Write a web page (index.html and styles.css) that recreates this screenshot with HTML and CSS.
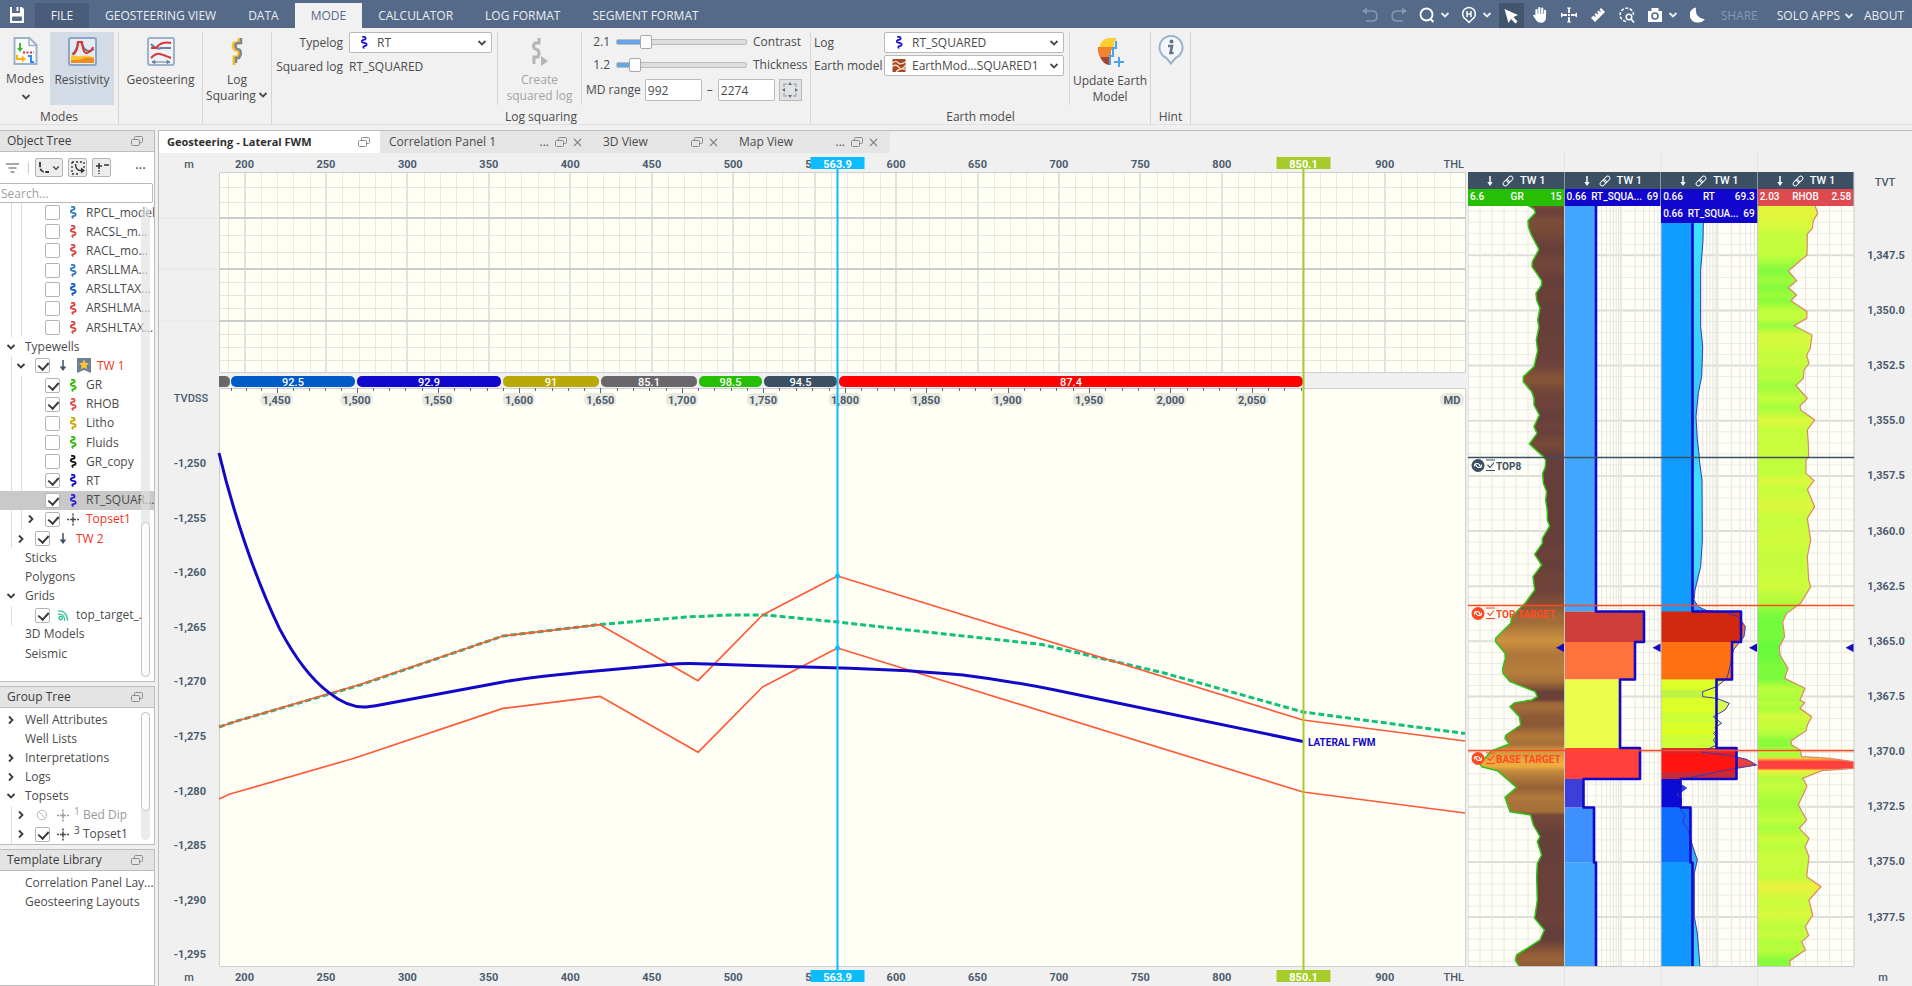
FILE: index.html
```
<!DOCTYPE html>
<html lang="en">
<head>
<meta charset="utf-8">
<title>Geosteering - Lateral FWM</title>
<link rel="stylesheet" href="styles.css">
</head>
<body>
<svg class="defs" aria-hidden="true">
  <symbol id="log" viewBox="0 0 12 14"><path d="M4 1h2.200c2 0 2 2.600.3 3l-1.800.5C3.300 5 3.300 6.800 4.800 7.100l2.600.5c1.900.5 1.900 2.600.2 3.100l-1.800.5c-.8.3-.8 1.800.6 1.800" fill="none" stroke="currentColor" stroke-width="2"/></symbol>
  <symbol id="down" viewBox="0 0 10 10"><path d="M1.500 3 5 6.500 8.500 3" fill="none" stroke="currentColor" stroke-width="1.800"/></symbol>
  <symbol id="right" viewBox="0 0 10 10"><path d="M3 1.500 6.500 5 3 8.500" fill="none" stroke="currentColor" stroke-width="1.800"/></symbol>
  <symbol id="restore" viewBox="0 0 12 11"><path d="M3.500 3.500V1.500q0-1 1-1h6q1 0 1 1v4q0 1-1 1H9M1.500 3.500h6q1 0 1 1v4q0 1-1 1h-6q-1 0-1-1v-4q0-1 1-1z" fill="none" stroke="currentColor"/></symbol>
  <symbol id="close" viewBox="0 0 10 10"><path d="M1 1l8 8M9 1 1 9" fill="none" stroke="currentColor" stroke-width="1.200"/></symbol>
  <symbol id="well" viewBox="0 0 12 14"><path d="M6 1v8" stroke="#3b5063" stroke-width="1.600"/><path d="M2.500 8h7L6 13z" fill="#3b5063"/></symbol>
  <symbol id="topset" viewBox="0 0 12 12"><path d="M0 6h2M3 6h6M10 6h2M6 0v2M6 3v6M6 10v2" stroke="currentColor" stroke-width="1.500"/></symbol>
  <symbol id="star" viewBox="0 0 14 15"><path d="M0 0h14v15l-7-3-7 3z" fill="#6d7f96"/><path d="M7 1.500l1.500 3.300 3.600.4-2.700 2.400.8 3.600L7 9.400l-3.200 1.800.8-3.600L1.900 5.200l3.600-.4z" fill="#ffc62e"/></symbol>
  <symbol id="grid" viewBox="0 0 14 14"><path d="M1 2c6-1.500 11 3 11.500 11M1 5.500c4.500-1 8 2 8 7.500" fill="none" stroke="#2bc48a" stroke-width="1.500"/><circle cx="4.200" cy="10" r="2" fill="none" stroke="#2bc48a" stroke-width="1.600"/></symbol>
  <symbol id="ban" viewBox="0 0 12 12"><circle cx="6" cy="6" r="4.800" fill="none" stroke="#bbb"/><path d="M2.600 2.600l6.800 6.800" stroke="#bbb"/></symbol>
  <symbol id="link" viewBox="0 0 14 14"><g fill="none" stroke="currentColor" stroke-width="1.100" transform="rotate(-45 7 7)"><rect x="0" y="4.500" width="8" height="5" rx="2.500"/><rect x="6" y="4.500" width="8" height="5" rx="2.500"/></g></symbol>
  <symbol id="arrow" viewBox="0 0 8 12"><path d="M4 1v7" stroke="currentColor" stroke-width="1.500"/><path d="M1.300 7h5.400L4 11z" fill="currentColor"/></symbol>
</svg>

<header class="topbar">
  <button class="tool save" aria-label="Save"><svg width="16" height="18" viewBox="0 0 16 18"><path d="M1 1h2v6h8V1h2l2 2v14H1z" fill="#fff"/><path d="M7.500 1h2v4h-2z" fill="#fff"/><rect x="3" y="10.500" width="10" height="4.500" rx="1" fill="#546a88"/></svg></button>
  <nav class="menu">
    <a class="file" href="#file">FILE</a>
    <a href="#view">GEOSTEERING VIEW</a>
    <a href="#data">DATA</a>
    <a class="active" href="#mode">MODE</a>
    <a href="#calc">CALCULATOR</a>
    <a href="#log">LOG FORMAT</a>
    <a href="#segment">SEGMENT FORMAT</a>
  </nav>
  <div class="tools">
    <button class="tool dim" aria-label="Undo"><svg width="18" height="18" viewBox="0 0 18 18"><path d="M2 5h9q5 0 5 5t-5 5H5" fill="none" stroke="currentColor" stroke-width="1.500"/><path d="M1 5l5-3.500v7z" fill="currentColor"/></svg></button>
    <button class="tool dim" aria-label="Redo"><svg width="18" height="18" viewBox="0 0 18 18"><path d="M16 5H7q-5 0-5 5t5 5h6" fill="none" stroke="currentColor" stroke-width="1.500"/><path d="M17 5l-5-3.500v7z" fill="currentColor"/></svg></button>
    <button class="tool wide" aria-label="Zoom"><svg width="16" height="16" viewBox="0 0 16 16"><circle cx="7.500" cy="7.500" r="6" fill="none" stroke="#fff" stroke-width="1.800"/><path d="M11.500 12l3 3" stroke="#fff" stroke-width="2"/></svg><svg class="chev"><use href="#down"/></svg></button>
    <button class="tool wide" aria-label="Horizon"><svg width="16" height="18" viewBox="0 0 16 18"><path d="M8 16.500 5 13.500a6.400 6.400 0 1 1 6 0z" fill="none" stroke="#fff" stroke-width="1.500"/><path d="M6 5v6M10 5v6M6 8h4" stroke="#fff" stroke-width="1.500"/></svg><svg class="chev"><use href="#down"/></svg></button>
    <button class="tool on" aria-label="Select"><svg width="16" height="18" viewBox="0 0 16 18"><path d="M1.500 2 15 8l-4.500 2 4 4.500-2 2-4.500-4.500L5.500 16z" fill="#fff"/></svg></button>
    <button class="tool" aria-label="Pan"><svg width="18" height="18" viewBox="0 0 18 18"><path d="M5.500 9V4M8.300 8V2.200M11.200 8V2.500M14 9V4.800" stroke="#fff" stroke-width="2.200" stroke-linecap="round"/><path d="M4.500 8H15v4q-.5 4.800-5 4.800-3.500 0-5-2.800L2 9.500q1.500-1.500 2.500.5z" fill="#fff"/></svg></button>
    <button class="tool" aria-label="Move"><svg width="18" height="18" viewBox="0 0 18 18"><path d="M7 1.500h4L9 5zM7 16.500h4L9 13zM1 6.500v5L4.500 9zM17 6.500v5L13.500 9z" fill="#fff"/><path d="M9 4v3M9 11v3M4 9h3M11 9h3M8 9h2" stroke="#fff" stroke-width="1.800"/></svg></button>
    <button class="tool" aria-label="Measure"><svg width="16" height="16" viewBox="0 0 16 16"><path d="M1 11 11 1l4 4L5 15z" fill="#fff"/><path d="M3.500 7.500l2 2M6 5 8 7M8.500 2.500l2 2" stroke="#546a88" stroke-width="1.400"/></svg></button>
    <button class="tool" aria-label="Lasso zoom"><svg width="18" height="18" viewBox="0 0 18 18"><path d="M15.500 9A6.700 6.700 0 1 0 8 15.500" fill="none" stroke="#fff" stroke-width="1.500" stroke-dasharray="3 1.500"/><circle cx="11" cy="11" r="2.800" fill="none" stroke="#fff" stroke-width="1.500"/><path d="M13 13l3 3.500" stroke="#fff" stroke-width="1.800"/></svg></button>
    <button class="tool wide" aria-label="Snapshot"><svg width="16" height="16" viewBox="0 0 16 16"><path d="M1 4h3.500V1h7v3H15v11H1z" fill="#fff"/><circle cx="8" cy="9" r="3" fill="none" stroke="#546a88" stroke-width="1.600"/></svg><svg class="chev"><use href="#down"/></svg></button>
    <button class="tool" aria-label="Dark theme"><svg width="16" height="18" viewBox="0 0 16 18"><path d="M6 1.500Q4.500 11.500 15 13.500 12 16.500 8.500 16.500A7.500 7.500 0 0 1 6 1.500z" fill="#fff"/></svg></button>
  </div>
  <nav class="menu account">
    <a class="dim" href="#share">SHARE</a>
    <a href="#solo">SOLO APPS <svg class="chev"><use href="#down"/></svg></a>
    <a href="#about">ABOUT</a>
  </nav>
</header>

<section class="ribbon" aria-label="Mode">
  <div class="group g-modes">
    <div class="body">
      <button class="big"><svg width="25" height="28" viewBox="0 0 25 28"><path d="M1.500 1h15l7 7v19h-22z" fill="#f8fafc" stroke="#9db2ca" stroke-width="2"/><path d="M16 1v7.500h7" fill="none" stroke="#9db2ca" stroke-width="1.500"/><path d="M7 6v6" stroke="#3dbb2e" stroke-width="2"/><path d="M4 11h6l-3 4z" fill="#3dbb2e"/><path d="M10 15.500h11" stroke="#e03030" stroke-width="2" stroke-dasharray="2 1.500"/><path d="M4 18v4h5" stroke="#ffb400" stroke-width="2.200" fill="none"/><path d="M9 18.500v7l4-3.500z" fill="#ffb400"/><path d="M15 19h3v6h3" fill="none" stroke="#2a8ff0" stroke-width="2"/></svg><span>Modes</span><svg class="chev"><use href="#down"/></svg></button>
      <button class="big pressed"><svg width="29" height="29" viewBox="0 0 29 29"><rect x="1" y="1" width="27" height="27" rx="2" fill="#e4ebf3" stroke="#8ba6c6" stroke-width="2"/><path d="M4 17Q9 14 10 5h3q3 9 8 9 2 0 5-2" fill="none" stroke="#6d7887" stroke-width="2"/><path d="M5 18Q10 14 10 5l4 0q1 12 5 11t6-6" fill="none" stroke="#e03434" stroke-width="2"/><path d="M3 18q8 2 11 1t12 1v6H3z" fill="#ffc629"/><path d="M3 23q9 0 12-1.500t11-.5v5H3z" fill="#f08a24"/></svg><span>Resistivity</span></button>
    </div>
    <p>Modes</p>
  </div>
  <div class="group g-geo">
    <div class="body"><button class="big"><svg width="28" height="29" viewBox="0 0 28 29"><rect x="1" y="1" width="26" height="27" rx="2" fill="#eef3f8" stroke="#9db2ca" stroke-width="2"/><path d="M4 7q5 6 10 4h10" fill="none" stroke="#6d7f96" stroke-width="2"/><path d="M4 11h5q3-4 7-5t8 0M4 21q5-5 9-4t11 4" fill="none" stroke="#e03434" stroke-width="2"/><path d="M5 25h18M5 25l3-1.500v3zM23 25l-3-1.500v3z" stroke="#6d7f96" fill="#6d7f96"/></svg><span>Geosteering</span></button></div>
  </div>
  <div class="group g-sq">
    <div class="body"><button class="big"><svg width="14" height="29" viewBox="0 0 14 29"><path d="M9 1v5H4q-2 4 1 7h3q2 3 0 7H4v8" fill="none" stroke="#fbbf28" stroke-width="3"/><path d="M11 1v5H7q-3 3 0 6l3 1q2 4-1 8H6v5" fill="none" stroke="#7c8794" stroke-width="2.500"/></svg><span>Log<br>Squaring<svg class="chev"><use href="#down"/></svg></span></button></div>
  </div>
  <div class="group g-log">
    <div class="body">
      <div class="fields typelog">
        <label for="typelog">Typelog</label>
        <span class="pick blue"><svg class="ico"><use href="#log"/></svg><select id="typelog"><option>RT</option></select><svg class="chev"><use href="#down"/></svg></span>
        <span>Squared log</span><output>RT_SQUARED</output>
      </div>
      <button class="big create" disabled><svg width="18" height="29" viewBox="0 0 18 29"><path d="M8 1v5H4q-3 3 0 6l3 1q2 3 0 7H3v7" fill="none" stroke="#b5b5b5" stroke-width="3"/><path d="M10 19l7 5-7 5z" fill="#b5b5b5"/></svg><span>Create<br>squared log</span></button>
      <div class="tune">
        <div class="slide"><output>2.1</output><input id="contrast" type="range" min="0" max="100" value="20" style="--v:20%"><label for="contrast">Contrast</label></div>
        <div class="slide"><output>1.2</output><input id="thick" type="range" min="0" max="100" value="10" style="--v:10%"><label for="thick">Thickness</label></div>
        <div class="range"><label for="md1">MD range</label><input id="md1" type="text" value="992"><span>–</span><input type="text" aria-label="MD range end" value="2274"><button aria-label="Fit range"><svg width="16" height="16" viewBox="0 0 16 16"><path d="M2 5V2h3M11 2h3v3M14 11v3h-3M5 14H2v-3" fill="none" stroke="#9fb0c4" stroke-width="1.500"/><path d="M8 0l2 3H6zM8 16l2-3H6zM0 8l3-2v4zM16 8l-3-2v4z" fill="#5c7088"/></svg></button></div>
      </div>
    </div>
    <p>Log squaring</p>
  </div>
  <div class="group g-earth">
    <div class="body">
      <div class="fields earth">
        <label for="elog">Log</label>
        <span class="pick blue"><svg class="ico"><use href="#log"/></svg><select id="elog"><option>RT_SQUARED</option></select><svg class="chev"><use href="#down"/></svg></span>
        <label for="emod">Earth model</label>
        <span class="pick"><svg class="ico em" viewBox="0 0 14 14"><path d="M0 0h14v14H0z" fill="#a54a28"/><path d="M0 4q4-3 6 0t8-1M0 8q4-3 7 1t7-2M4 14q3-5 10-3" fill="none" stroke="#f6dcc0" stroke-width="1.500"/></svg><select id="emod"><option>EarthMod...SQUARED1</option></select><svg class="chev"><use href="#down"/></svg></span>
      </div>
      <button class="big update"><svg width="29" height="30" viewBox="0 0 29 30"><path d="M3 10Q6 1 14 1h6v3h-2v6z" fill="#ffce2e"/><path d="M2 10h16v3h-3v7H4Q1 15 2 10z" fill="#ee8433"/><path d="M4 20h9v8Q7 27 4 20z" fill="#a8432e"/><path d="M20 4v7h-3v8h-3v9" fill="none" stroke="#47a4f2" stroke-width="2"/><path d="M23 20v10M18 25h10" stroke="#47a4f2" stroke-width="2"/></svg><span>Update Earth<br>Model</span></button>
    </div>
    <p>Earth model</p>
  </div>
  <div class="group g-hint">
    <div class="body"><button class="big" aria-label="Hint"><svg width="26" height="31" viewBox="0 0 26 31"><path d="M13 29.500 8.500 24a11.500 11.500 0 1 1 9 0z" fill="#f4f7fa" stroke="#9db2ca" stroke-width="2"/><circle cx="13.500" cy="7.500" r="2" fill="#62738a"/><path d="M10 12h4l-1.500 7h3" fill="none" stroke="#62738a" stroke-width="2.600"/></svg></button></div>
    <p>Hint</p>
  </div>
</section>

<main class="work">
  <aside class="side">
    <section class="panel">
      <h2>Object Tree<svg class="restore"><use href="#restore"/></svg></h2>
      <div class="treebar">
        <button class="flat" aria-label="Filter"><svg width="13" height="12" viewBox="0 0 13 12"><path d="M0 2h13M2.500 6h8M4.500 10h4" stroke="#8a8a8a" stroke-width="1.300"/></svg></button><i></i>
        <button class="boxed w" aria-label="Trajectory"><svg width="12" height="12" viewBox="0 0 12 12"><path d="M2 0v4q0 6 5 6h4" fill="none" stroke="#333" stroke-width="1.800" stroke-dasharray="5 1.500"/></svg><svg class="chev"><use href="#down"/></svg></button>
        <button class="boxed" aria-label="Select wells"><svg width="14" height="14" viewBox="0 0 14 14"><path d="M1 1h12v7M1 1v12h7" fill="none" stroke="#333" stroke-width="1.300" stroke-dasharray="2 2"/><path d="M4.500 3q0 6.500 5 6.500h2" fill="none" stroke="#333" stroke-width="1.400"/><path d="M10 6.500l4 3-4 3z" fill="#333"/></svg></button>
        <button class="boxed" aria-label="Tops"><svg width="14" height="12" viewBox="0 0 14 12"><path d="M4 1v11M1 4h6M9 3h5" stroke="#333" stroke-width="1.500" stroke-dasharray="6 1.300 1.500 1.300"/></svg></button>
        <button class="flat more" aria-label="More">…</button>
      </div>
      <input class="search" type="text" placeholder="Search..." aria-label="Search">
      <div class="tree tall">
        <div class="row l2"><b></b><input type="checkbox" id="t1"><svg class="ico" color="#2f78c4"><use href="#log"/></svg><label for="t1">RPCL_model</label></div>
        <div class="row l2"><b></b><input type="checkbox" id="t2"><svg class="ico" color="#e04040"><use href="#log"/></svg><label for="t2">RACSL_m...</label></div>
        <div class="row l2"><b></b><input type="checkbox" id="t3"><svg class="ico" color="#e04040"><use href="#log"/></svg><label for="t3">RACL_mo...</label></div>
        <div class="row l2"><b></b><input type="checkbox" id="t4"><svg class="ico" color="#2f78c4"><use href="#log"/></svg><label for="t4">ARSLLMA...</label></div>
        <div class="row l2"><b></b><input type="checkbox" id="t5"><svg class="ico" color="#0b5bd0"><use href="#log"/></svg><label for="t5">ARSLLTAX...</label></div>
        <div class="row l2"><b></b><input type="checkbox" id="t6"><svg class="ico" color="#e04040"><use href="#log"/></svg><label for="t6">ARSHLMA...</label></div>
        <div class="row l2"><b></b><input type="checkbox" id="t7"><svg class="ico" color="#e04040"><use href="#log"/></svg><label for="t7">ARSHLTAX...</label></div>
        <div class="row"><svg class="tw"><use href="#down"/></svg><span>Typewells</span></div>
        <div class="row l1"><svg class="tw"><use href="#down"/></svg><input type="checkbox" id="t8" checked><svg class="ico"><use href="#well"/></svg><svg class="star"><use href="#star"/></svg><label class="red" for="t8">TW 1</label></div>
        <div class="row l2"><b></b><input type="checkbox" id="t9" checked><svg class="ico" color="#26bf04"><use href="#log"/></svg><label for="t9">GR</label></div>
        <div class="row l2"><b></b><input type="checkbox" id="t10" checked><svg class="ico" color="#e34a4a"><use href="#log"/></svg><label for="t10">RHOB</label></div>
        <div class="row l2"><b></b><input type="checkbox" id="t11"><svg class="ico" color="#c4a800"><use href="#log"/></svg><label for="t11">Litho</label></div>
        <div class="row l2"><b></b><input type="checkbox" id="t12"><svg class="ico" color="#26bf04"><use href="#log"/></svg><label for="t12">Fluids</label></div>
        <div class="row l2"><b></b><input type="checkbox" id="t13"><svg class="ico" color="#111"><use href="#log"/></svg><label for="t13">GR_copy</label></div>
        <div class="row l2"><b></b><input type="checkbox" id="t14" checked><svg class="ico" color="#1408c8"><use href="#log"/></svg><label for="t14">RT</label></div>
        <div class="row l2 sel"><b></b><input type="checkbox" id="t15" checked><svg class="ico" color="#2a22dc"><use href="#log"/></svg><label for="t15">RT_SQUAR...</label></div>
        <div class="row l2"><svg class="tw"><use href="#right"/></svg><input type="checkbox" id="t16" checked><svg class="ico"><use href="#topset"/></svg><label class="red" for="t16">Topset1</label></div>
        <div class="row l1"><svg class="tw"><use href="#right"/></svg><input type="checkbox" id="t17" checked><svg class="ico"><use href="#well"/></svg><label class="red" for="t17">TW 2</label></div>
        <div class="row"><b></b><span>Sticks</span></div>
        <div class="row"><b></b><span>Polygons</span></div>
        <div class="row"><svg class="tw"><use href="#down"/></svg><span>Grids</span></div>
        <div class="row l1"><b></b><input type="checkbox" id="t18" checked><svg class="ico"><use href="#grid"/></svg><label for="t18">top_target_..</label></div>
        <div class="row"><b></b><span>3D Models</span></div>
        <div class="row"><b></b><span>Seismic</span></div>
        <div class="scroll"><span></span></div>
      </div>
    </section>
    <section class="panel">
      <h2>Group Tree<svg class="restore"><use href="#restore"/></svg></h2>
      <div class="tree group-tree">
        <div class="row"><svg class="tw"><use href="#right"/></svg><span>Well Attributes</span></div>
        <div class="row"><b></b><span>Well Lists</span></div>
        <div class="row"><svg class="tw"><use href="#right"/></svg><span>Interpretations</span></div>
        <div class="row"><svg class="tw"><use href="#right"/></svg><span>Logs</span></div>
        <div class="row"><svg class="tw"><use href="#down"/></svg><span>Topsets</span></div>
        <div class="row l1 off"><svg class="tw"><use href="#right"/></svg><svg class="ban"><use href="#ban"/></svg><svg class="ico"><use href="#topset"/></svg><sup>1</sup><span>Bed Dip</span></div>
        <div class="row l1"><svg class="tw"><use href="#right"/></svg><input type="checkbox" id="t19" checked><svg class="ico"><use href="#topset"/></svg><sup>3</sup><label for="t19">Topset1</label></div>
        <div class="scroll upper"><span></span></div>
      </div>
    </section>
    <section class="panel">
      <h2>Template Library<svg class="restore"><use href="#restore"/></svg></h2>
      <div class="tree library">
        <div class="row"><b></b><span>Correlation Panel Lay...</span></div>
        <div class="row"><b></b><span>Geosteering Layouts</span></div>
      </div>
    </section>
  </aside>

  <section class="views">
    <div class="tabs" role="tablist">
      <div class="tab t-geo active" role="tab">Geosteering - Lateral FWM<svg class="restore"><use href="#restore"/></svg></div>
      <div class="tab t-corr" role="tab">Correlation Panel 1<em>...</em><svg class="restore"><use href="#restore"/></svg><svg class="x"><use href="#close"/></svg></div>
      <div class="tab t-3d" role="tab">3D View<em></em><svg class="restore"><use href="#restore"/></svg><svg class="x"><use href="#close"/></svg></div>
      <div class="tab t-map" role="tab">Map View<em>...</em><svg class="restore"><use href="#restore"/></svg><svg class="x"><use href="#close"/></svg></div>
    </div>
    <div class="plots">
      <svg id="section" class="plot" role="img" aria-label="Lateral section"></svg>
      <div class="tracks">
        <svg id="logs" class="plot" role="img" aria-label="Typewell logs"></svg>
        <div class="heads">
          <div class="head"><h3><svg class="a"><use href="#arrow"/></svg><svg class="k"><use href="#link"/></svg>TW 1</h3><div class="scale green"><span>6.6</span><span>GR</span><span>15</span></div></div>
          <div class="head"><h3><svg class="a"><use href="#arrow"/></svg><svg class="k"><use href="#link"/></svg>TW 1</h3><div class="scale"><span>0.66</span><span>RT_SQUA...</span><span>69</span></div></div>
          <div class="head"><h3><svg class="a"><use href="#arrow"/></svg><svg class="k"><use href="#link"/></svg>TW 1</h3><div class="scale"><span>0.66</span><span>RT</span><span>69.3</span></div><div class="scale"><span>0.66</span><span>RT_SQUA...</span><span>69</span></div></div>
          <div class="head"><h3><svg class="a"><use href="#arrow"/></svg><svg class="k"><use href="#link"/></svg>TW 1</h3><div class="scale rose"><span>2.03</span><span>RHOB</span><span>2.58</span></div></div>
        </div>
      </div>
    </div>
  </section>
</main>
<script src="plots.js"></script>
</body>
</html>
```

FILE: styles.css
```
* { box-sizing: border-box; }
html, body { height: 100%; }
body {
  margin: 0; display: flex; flex-direction: column; overflow: hidden;
  background: #f0f0f0; color: #4b4b4b;
  font: 12px/16px "Open Sans", "Noto Sans", sans-serif;
}
button, input, select { font: inherit; color: inherit; }
button { border: 0; background: none; padding: 0; }
a { color: inherit; text-decoration: none; }
p, h2, h3 { margin: 0; font-weight: 400; font-size: 12px; }
svg { flex: none; }
.defs { position: absolute; width: 0; height: 0; }
.chev { width: 10px; height: 10px; }

.topbar { display: flex; height: 28px; flex: none; background: #546a88; color: #e9edf3; }
.save { width: 35px; }
.tool { display: flex; align-items: center; justify-content: center; width: 29px; flex: none; padding-top: 2px; }
.tool.save { width: 33px; }
.tool.wide { width: 42px; gap: 5px; }
.tool.on { width: 25px; margin: 3px 2px 0 1px; padding: 0; background: #43556d; }
.tool.dim, .menu .dim { color: #8797ae; }
.menu { display: flex; }
.menu a { display: flex; align-items: center; gap: 6px; padding: 3px 16px 0; white-space: nowrap; }
.menu .file { background: #495c7a; margin: 3px 0 0 2px; padding: 0; width: 54px; justify-content: center; }
.menu .active { background: #f1f1f1; color: #546a88; margin-top: 3px; padding-top: 0; }
.tools { display: flex; margin-left: auto; }
.account { padding-right: 8px; }
.menu.account a { padding: 3px 0 0 8px; gap: 4px; }
.menu.account a + a { padding-left: 19px; }
.menu.account a:last-child { padding-left: 10px; }

.ribbon { display: flex; flex: none; height: 97px; background: #f1f1f1; border-bottom: 1px solid #dfe1e4; padding: 4px 0 0; }
.group { display: flex; flex-direction: column; justify-content: space-between; border-right: 1px solid #d6d6d6; flex: none; }
.group p { text-align: center; line-height: 15px; }
.body { display: flex; height: 73px; }
.big { display: flex; flex-direction: column; align-items: center; padding-top: 5px; gap: 6px; flex: 1; white-space: nowrap; }
.big .chev { margin: -1px 0 0 2px; }
.big:disabled { color: #a4a4a4; }
.pressed { background: #d3dbe6; flex: 0 0 64px; margin-right: 4px; }
.g-modes { width: 119px; }
.g-geo { width: 84px; }
.g-sq { width: 69px; }
.g-log { width: 539px; }
.g-earth { width: 340px; }
.g-hint { width: 40px; }
.g-hint .big { padding-top: 2px; }
.fields { display: grid; align-content: start; align-items: center; white-space: nowrap; }
.typelog { gap: 3px 6px; grid-template-columns: 71px 143px; grid-template-rows: 21px 22px; padding-right: 5px; }
.typelog > label, .typelog > span:not(.pick) { text-align: right; }
.earth { gap: 2px 0; grid-template-columns: 70px 180px; grid-template-rows: 21px 21px; padding: 0 5px 0 3px; }
.pick { position: relative; display: block; height: 21px; }
.pick select { appearance: none; width: 100%; height: 100%; padding: 0 20px 0 27px; background: #fff; border: 1px solid #b9b9b9; border-radius: 2px; }
.pick .ico { position: absolute; left: 9px; top: 4px; width: 12px; height: 13px; color: #2018d0; }
.pick .ico.em { width: 14px; left: 8px; }
.pick .chev { position: absolute; right: 5px; top: 6px; }
.create { border: solid #d6d6d6; border-width: 0 1px; flex: 0 0 85px; }
.tune { display: flex; flex-direction: column; padding: 0 5px 0 4px; flex: 1; }
.slide { display: grid; grid-template-columns: 24px 131px 1fr; column-gap: 6px; align-items: center; height: 23px; padding-bottom: 4px; }
.slide output { text-align: right; }
.slide label { white-space: nowrap; }
.slide input { appearance: none; width: 131px; height: 13px; margin: 0; background: none; }
.slide input::-webkit-slider-runnable-track { height: 6px; border: 1px solid #bcbcbc; border-radius: 2px; background: linear-gradient(90deg, #62a6e8 var(--v), #dedede var(--v)); }
.slide input::-webkit-slider-thumb { appearance: none; width: 12px; height: 14px; margin-top: -5px; background: #fdfdfd; border: 1px solid #a8a8a8; border-radius: 2px; }
.range { display: flex; align-items: center; gap: 4px; padding-top: 1px; white-space: nowrap; }
.range span { padding: 0 1px; }
.range input { width: 57px; height: 22px; padding: 0 2px; border: 1px solid #b9b9b9; border-radius: 2px; background: #fff; }
.range button { display: flex; align-items: center; justify-content: center; width: 23px; height: 22px; border: 1px solid #b9b9b9; background: #e2e2e2; }
.update { border-left: 1px solid #d6d6d6; }

.work { display: grid; grid-template-columns: 155px 1fr; column-gap: 3px; flex: 1; min-height: 0; padding-top: 5px; }
.side { display: grid; grid-template-rows: 552fr 159fr 137fr; gap: 4px; min-height: 0; }
.panel { display: flex; flex-direction: column; min-height: 0; background: #fff; border: solid #bdbdbd; border-width: 1px 1px 1px 0; overflow: hidden; }
.panel h2 { display: flex; align-items: center; justify-content: space-between; height: 21px; flex: none; padding: 0 11px 0 7px; background: #e4e4e4; border-bottom: 1px solid #bdbdbd; color: #3c3c3c; }
.restore { width: 12px; height: 11px; color: #8c8c8c; }
.treebar { display: flex; align-items: center; height: 31px; flex: none; padding-left: 6px; gap: 5px; }
.treebar i { width: 1px; height: 12px; background: #ccc; margin: 0 1px 0 4px; }
.treebar button { display: flex; align-items: center; justify-content: center; }
.boxed { width: 19px; height: 19px; border: 1px solid #b4b4b4; border-radius: 2px; background: #ededed; }
.boxed.w { width: 28px; gap: 2px; }
.boxed .chev { width: 8px; height: 8px; }
.treebar .more { margin-left: auto; padding: 0 8px 7px 0; font-size: 14px; }
.search { width: 153px; height: 20px; flex: none; padding: 0 1px; border: 1px solid #b9b9b9; border-left: 0; border-radius: 0 2px 2px 0; }
.search::placeholder { color: #a0a0a0; }
.tree { position: relative; display: flex; flex-direction: column; flex: 1; min-height: 0; }
.tree.tall { padding-bottom: 18px; }
.tree.group-tree { padding: 2px 0 0; }
.tree.library { padding-top: 2px; }
.row { display: flex; align-items: center; flex: 1 1 19px; min-height: 0; padding-left: 5px; white-space: nowrap; overflow: hidden; }
.library .row { flex: 0 0 19px; }
.l1 { padding-left: 15px; background-image: linear-gradient(90deg, transparent 11px, #dedede 11px, #dedede 12px, transparent 12px); }
.l2 { padding-left: 25px; background-image: linear-gradient(90deg, transparent 11px, #dedede 11px, #dedede 12px, transparent 12px, transparent 21px, #dedede 21px, #dedede 22px, transparent 22px); }
.row.sel { background: #c9c9c9; }
.row > b, .tw { width: 12px; height: 10px; margin-right: 8px; flex: none; color: #3c3c3c; }
.row input { appearance: none; position: relative; width: 15px; height: 15px; margin: 0 7px 0 0; flex: none; border: 1px solid #b4b4b4; border-radius: 2px; background: #fff; }
.row input:checked::before { content: ""; position: absolute; left: 4px; top: 1px; width: 5px; height: 8px; border: solid #3c3c3c; border-width: 0 2px 2px 0; transform: rotate(42deg); }
.row .ico { width: 12px; height: 13px; margin-right: 7px; }
.row .star { width: 14px; height: 15px; margin: 0 6px 0 1px; }
.ban { width: 12px; height: 12px; margin: 0 9px 0 1px; }
.row sup { width: 5px; margin: -8px 4px 0 -2px; font-size: 10px; line-height: 10px; }
.off { color: #9a9a9a; }
.red { color: #f4321e; }
.scroll { position: absolute; right: 4px; top: 4px; bottom: 4px; width: 9px; border-radius: 5px; background: rgba(225,225,225,.65); }
.scroll span { position: absolute; left: 0; right: 0; bottom: 0; height: 33%; border: 1px solid #c4c4c4; border-radius: 5px; background: rgba(255,255,255,.85); }
.upper span { top: 0; bottom: auto; height: 77%; }

.views { display: flex; flex-direction: column; min-width: 0; min-height: 0; border: solid #bdbdbd; border-width: 1px 0 0 1px; }
.tabs { display: flex; height: 22px; flex: none; }
.tab { display: flex; align-items: center; gap: 6px; padding: 0 12px 0 9px; background: #e5e5e5; white-space: nowrap; }
.tab em { margin-left: auto; font-style: normal; }
.tab .x { width: 9px; height: 9px; color: #777; }
.tab.active { background: #fff; color: #2e2e2e; font: 700 11px/16px "Open Sans", "Noto Sans", sans-serif; justify-content: space-between; padding: 0 10px 0 8px; }
.t-geo { width: 221px; }
.t-corr { width: 214px; }
.t-3d { width: 136px; }
.t-map { width: 160px; }
.plots { display: grid; grid-template-columns: 1309fr 444fr; flex: 1; min-height: 0; }
.plot { display: block; width: 100%; height: 100%; min-height: 0; }
.plot text { font: 700 11px Roboto, sans-serif; fill: #4a5b6e; dominant-baseline: central; text-anchor: middle; stroke: none; }
.plot .start { text-anchor: start; }
.plot .end { text-anchor: end; }
.plot .light { font-weight: 500; }
.plot .bold { font-size: 10px; }
.plot .white { fill: #fff; }
.tracks { position: relative; min-width: 0; min-height: 0; }
.heads { position: absolute; left: 0; top: 19px; width: 87%; display: grid; grid-template-columns: repeat(4, 1fr); align-items: start; color: #fff; font: 500 10px/16px Roboto, sans-serif; }
.head { border-right: 1px solid #8d9aa6; min-width: 0; }
.head h3 { display: flex; justify-content: center; align-items: center; gap: 8px; height: 17px; background: #3b5063; font: 500 11px/16px Roboto, sans-serif; }
.a { width: 8px; height: 12px; }
.k { width: 12px; height: 12px; margin-right: -2px; }
.scale { display: flex; justify-content: space-between; height: 17px; padding: 0 2px; background: #1106cb; white-space: nowrap; }
.scale.green { background: #26bf04; }
.scale.rose { background: #de4a50; }
```

FILE: plots.js
```
const NS = 'http://www.w3.org/2000/svg';
function el(parent, tag, attrs, text) {
  const n = document.createElementNS(NS, tag);
  for (const k in attrs) n.setAttribute(k, attrs[k]);
  if (text !== undefined) n.textContent = text;
  parent.appendChild(n);
  return n;
}

/* A canvas stretches its shapes with the pane; labels keep their size and
   are anchored by percentage. */
function canvas(id, x0, y0, w, h) {
  const root = document.getElementById(id);
  const layer = () => el(root, 'svg', { viewBox: `${x0} ${y0} ${w} ${h}`, preserveAspectRatio: 'none', width: '100%', height: '100%' });
  const mark = (x, y) => el(root, 'svg', { x: (x - x0) / w * 100 + '%', y: (y - y0) / h * 100 + '%', overflow: 'visible' });
  const label = (x, y, text, cls = '') => el(mark(x, y), 'text', { x: 0, y: 0, class: cls }, text);
  return { root, layer, mark, label };
}
const line = (g, x1, y1, x2, y2, stroke, width = 1) =>
  el(g, 'path', { d: `M${x1} ${y1}L${x2} ${y2}`, stroke, 'stroke-width': width, fill: 'none' });
const path = pts => 'M' + pts.map(p => p.join(' ')).join('L');

/* ---------- lateral section ---------- */
(function () {
  const c = canvas('section', 159, 153, 1309, 833);
  const g = c.layer();
  const L = 219, R = 1465, PX = 1.6289;
  const thl = v => 244.5 + (v - 200) * PX;
  el(g, 'rect', { x: L, y: 172, width: R - L, height: 200, fill: '#fffff6' });
  el(g, 'rect', { x: L, y: 388, width: R - L, height: 578, fill: '#fffff6' });
  for (let v = 190; v <= 940; v += 10) {
    const x = Math.round(thl(v)) + (v % 50 ? 0.5 : 0);
    line(g, x, 172, x, 372, v % 50 ? '#e9e9e2' : '#e2e2dc', v % 50 ? 1 : 2);
  }
  [187, 202, 235, 252, 282, 295, 308, 334, 347, 360].forEach(y => line(g, L, y + 0.5, R, y + 0.5, '#e5e5de'));
  [218, 269, 321].forEach(y => { line(g, L, y, R, y, '#cbcbcb', 2); line(g, 159, y, L, y, '#e6e6e2'); });
  el(g, 'path', { d: `M${L}.5 172.5H${R}.5V372.500H${L}.5zM${L}.5 388.500H${R}.5V966.500H${L}.5z`, fill: 'none', stroke: '#cfcfcf' });

  const segs = [[231, 355, '#005bc8', '92.5'], [357, 501, '#1106cb', '92.9'], [503, 599, '#b8a904', '91'], [601, 697, '#6a676b', '85.1'],
    [699, 762, '#26bf04', '98.5'], [764, 837, '#3b5063', '94.5'], [839, 1303, '#ff0000', '87.4']];
  el(g, 'path', { d: 'M219 376h6q5 0 5 5.500t-5 5.500h-6z', fill: '#6a676b' });
  segs.forEach(s => {
    el(g, 'rect', { x: s[0], y: 376, width: s[1] - s[0], height: 11, rx: 5, fill: s[2] });
    c.label((s[0] + s[1]) / 2, 382, s[3], 'white light');
  });

  const md = [231, 276.5, 356.5, 438, 519, 600.3, 682, 763, 845, 926, 1007.5, 1089, 1170.4, 1251.9, 1333];
  for (let i = 0; i < md.length - 1; i++) {
    const n = i ? 5 : 3;
    for (let k = 0; k < n; k++) {
      const x = Math.round(md[i] + (md[i + 1] - md[i]) * k / n) + 0.5;
      if (x < 1304) line(g, x, 388, x, i && !k ? 393 : 391, '#5c6b7a');
    }
  }
  const badge = (x, y, text, w) => {
    const m = c.mark(x, y);
    el(m, 'rect', { x: -w / 2, y: -6, width: w, height: 13, rx: 5, fill: '#e9e9e0' });
    el(m, 'text', { x: 0, y: 1 }, text);
  };
  for (let i = 1; i <= 13; i++) badge(md[i], 399, (1400 + i * 50).toLocaleString('en-US'), 32);
  badge(1452, 399, 'MD', 24);

  [[164, 189], [977, 189]].forEach(([y, mx]) => {
    c.label(mx, y, 'm', 'light');
    for (let v = 200; v <= 900; v += 50) if (v !== 850) c.label(thl(v), y, v);
    c.label(1464, y, 'THL', 'end light');
  });
  c.label(191, 398, 'TVDSS', 'light');
  for (let i = 0; i < 10; i++) c.label(206, 463.5 + i * 54.6, '-' + (1250 + i * 5).toLocaleString('en-US'), 'end');

  const shape = c.layer();
  const draw = (pts, stroke, w, dash) => el(shape, 'path', { d: path(pts), fill: 'none', stroke, 'stroke-width': w, 'stroke-dasharray': dash || 'none', 'stroke-linejoin': 'round' });
  draw([[219, 727], [237, 721], [333, 693], [360, 685], [503, 636], [600, 624.500], [686, 617], [730, 615], [766, 615], [837.500, 622], [908, 630], [1042, 644.500], [1164, 673], [1303, 712], [1465, 733.500]], '#12bf7c', 3, '6 3');
  draw([[219, 727], [237, 721], [333, 692.500], [360, 684.500], [503, 636], [600, 624.700], [698, 680.700], [762.500, 615], [837.500, 576], [1303, 720], [1465, 741]], '#ff5a36', 1.7);
  draw([[219, 799], [230, 794], [355, 758], [503, 708.400], [600, 696.300], [698, 752.300], [762.500, 687], [837.500, 648], [1303, 792], [1465, 813]], '#ff5a36', 1.7);
  el(shape, 'path', { d: 'M219 453C233 512 255 578 279.500 628.600Q303 673 328.600 692.400Q348 708 366 707Q376 706 385 704L503 682Q530 677 596 671L668 664.400Q685 663 708 664L762 665.800L850 668.300L908 670.700Q940 673 963 675Q1010 681 1055 690L1303 741.500', fill: 'none', stroke: '#1408c8', 'stroke-width': 3 });

  [[837.5, '#0bbcff', '563.9', 54], [1303.5, '#a6cb2b', '850.1', 54]].forEach(([x, col, text, w]) => {
    line(shape, x, 168, x, 970, col, 2);
    [163, 976].forEach(y => {
      const m = c.mark(x, y);
      el(m, 'rect', { x: -w / 2, y: -6, width: w, height: 12, fill: col });
      el(m, 'text', { x: 0, y: 1, class: 'white' }, text);
    });
  });
  [576, 648].forEach(y => el(shape, 'circle', { cx: 837.5, cy: y, r: 2.5, fill: '#0bbcff' }));
  c.label(1308, 742, 'LATERAL FWM', 'bold start').style.fill = '#1408c8';
})();

/* ---------- typewell tracks ---------- */
(function () {
  const c = canvas('logs', 1468, 153, 444, 833);
  const defs = el(c.root, 'defs', {});
  const g = c.layer();
  const X = [1468, 1564.5, 1661, 1757.5, 1854], T = 172, B = 966.5;
  const y = a => a.map(([px, py]) => [1460 + px / 3, py]);
  const join = (a, b, d) => y([].concat(a.map(p => [p[0], 160 + p[1] / 3]), b.map(p => [p[0], 440 + p[1] / 3]), d.map(p => [p[0], 700 + p[1] / 3])));

  el(g, 'rect', { x: 1468, y: T, width: 386, height: B - T, fill: '#fffff8' });
  for (let v = 0, p = 211.2; p < B; p += 11.03, v++) line(g, 1468, p, 1854, p, v % 5 === 4 ? '#deded8' : '#ecece6', v % 5 === 4 ? 2 : 1);
  [0, 3].forEach(t => { for (let i = 1; i < 8; i++) line(g, X[t] + i * 12, T, X[t] + i * 12, B, '#e8e8e2'); });
  [1, 2].forEach(t => {
    for (let e = -1; e < 2; e++) for (let n = 1; n < 10; n++) {
      const x = X[t] + (Math.log10(n) + e - Math.log10(0.66)) * 47.7;
      if (x > X[t] && x < X[t + 1]) line(g, x, T, x, B, '#e6e6e0', n === 1 ? 2 : 1);
    }
  });

  const hex = h => [1, 3, 5].map(i => parseInt(h.substr(i, 2), 16));
  function ramp(stops, v) {
    if (v <= stops[0][0]) return stops[0][1];
    for (let i = 1; i < stops.length; i++) if (v <= stops[i][0]) {
      const [a, ca] = stops[i - 1], [b, cb] = stops[i], f = (v - a) / (b - a), p = hex(ca), q = hex(cb);
      return 'rgb(' + p.map((k, j) => Math.round(k + (q[j] - k) * f)) + ')';
    }
    return stops[stops.length - 1][1];
  }
  function gradient(id, pts, stops) {
    const n = el(defs, 'linearGradient', { id, gradientUnits: 'userSpaceOnUse', x1: 0, x2: 0, y1: pts[0][1], y2: B });
    pts.forEach(p => el(n, 'stop', { offset: (p[1] - pts[0][1]) / (B - pts[0][1]), 'stop-color': ramp(stops, p[0]) }));
  }
  const at = px => 1460 + px / 3;

  const gr = join(
    [[205,137],[222,147],[226,158],[204,182],[205,200],[214,225],[237,268],[217,305],[216,320],[245,362],[245,375],[228,400],[230,420],[240,445],[233,480],[237,500],[229,540],[233,572],[222,620],[190,650],[190,665],[215,695],[222,715],[222,735],[238,765],[222,800],[231,820],[208,852],[250,890]],
    [[257,60],[256,80],[248,100],[250,130],[260,155],[257,180],[262,215],[262,240],[269,258],[247,295],[247,310],[224,343],[245,375],[219,410],[224,450],[195,490],[155,530],[152,550],[107,595],[107,605],[135,640],[136,655],[128,685],[129,700],[150,725],[225,755],[232,770],[215,780],[165,788]],
    [[150,20],[178,50],[182,75],[138,105],[135,115],[148,132],[95,152],[60,190],[65,200],[112,212],[170,262],[135,292],[150,335],[212,345],[220,375],[240,410],[232,425],[245,465],[232,490],[230,530],[232,600],[224,655],[253,690],[240,720],[170,765],[166,780],[178,800]]);
  gradient('gGR', gr, [[at(60), '#eead3e'], [at(107), '#c98f3e'], [at(135), '#b0783a'], [at(190), '#855336'], [at(225), '#6b423a'], [at(240), '#653d3a']]);
  el(g, 'path', { d: path(gr) + `L1564.5 ${B}V205z`, fill: 'url(#gGR)' });
  el(g, 'path', { d: path(gr), fill: 'none', stroke: '#2fc414', 'stroke-width': 1.5, 'stroke-linejoin': 'round' });

  function blocks(x0, list, stroke) {
    list.forEach(b => { if (b[3]) el(g, 'rect', { x: x0, y: b[0], width: b[2] - x0, height: b[1] - b[0], fill: b[3] }); });
    if (stroke) el(g, 'path', { d: path(list.flatMap(b => [[b[2], b[0]], [b[2], b[1]]])), fill: 'none', stroke: '#1408c8', 'stroke-width': 2.600, 'stroke-linejoin': 'round' });
  }
  blocks(1564.5, [[205, 611.500, 1596, '#41a6ff'], [611.500, 642, 1644, '#d03e3a'], [642, 679.500, 1635, '#ff723d'], [679.500, 748, 1620, '#ebff4a'],
    [748, 779, 1640, '#ff403c'], [779, 807.500, 1583.500, '#3e3ed8'], [807.500, 862.500, 1594, '#3f90ff'], [862.500, B, 1596, '#41a6ff']], true);

  const rt = join(
    [[730,187],[729,240],[722,330],[722,500],[728,560],[725,650],[715,700],[708,770],[712,840],[718,890]],
    [[718,60],[726,120],[727,300],[722,380],[705,450],[702,480],[715,500],[740,512],[800,518],[835,530],[856,560],[852,590],[820,630],[812,670],[805,700],[800,715],[770,740],[728,755],[728,770],[770,775]],
    [[808,10],[795,30],[760,50],[785,70],[765,82],[770,92],[760,100],[770,110],[760,120],[770,135],[725,157],[800,165],[860,178],[890,195],[800,210],[690,233],[660,237],[665,255],[680,264],[665,275],[650,283],[665,295],[662,330],[675,345],[668,365],[685,392],[692,420],[712,480],[703,520],[703,650],[712,700],[720,800]]);
  const rg = el(defs, 'linearGradient', { id: 'gRT', gradientUnits: 'userSpaceOnUse', x1: 0, x2: 0, y1: 205, y2: B });
  [[205, '#3fe4ff'], [420, '#35c8ff'], [480, '#3fe0ff'], [570, '#3fd8ff'], [610, '#2f9cff'], [612, '#e05838'], [635, '#f07840'], [642, '#ffb030'], [680, '#ff8a30'], [681, '#d8ff40'], [746, '#d8ff60'], [748, '#ff5040'], [778, '#d03040'], [779, '#2030e0'], [808, '#3f70f0'], [862, '#38b0f0'], [B, '#38d0ff']]
    .forEach(s => el(rg, 'stop', { offset: (s[0] - 205) / (B - 205), 'stop-color': s[1] }));
  el(g, 'path', { d: path(rt) + `L1661 ${B}V222z`, fill: 'url(#gRT)' });
  const sq = [[205, 611.500, 1692.500, '#119cff'], [611.500, 642, 1741, '#d22810'], [642, 679.500, 1732, '#ff7010'], [679.500, 748, 1716.500, '#dcff28'],
    [748, 779, 1736.500, '#ff1410'], [779, 807.500, 1680.500, '#0b0bd8'], [807.500, 862.500, 1690.500, '#0f6cff'], [862.500, B, 1692.500, '#0f98ff']];
  blocks(1661, sq, false);
  el(g, 'rect', { x: 1661, y: 690, width: 41, height: 8, fill: '#b4f050', opacity: 0.7 });
  el(g, 'rect', { x: 1661, y: 713, width: 54, height: 10, fill: '#c8ff3c', opacity: 0.7 });
  el(g, 'rect', { x: 1661, y: 735, width: 54, height: 13, fill: '#c8ff3c', opacity: 0.7 });
  el(g, 'rect', { x: 1661, y: 748, width: 75, height: 5, fill: '#d02a3a' });
  el(g, 'rect', { x: 1661, y: 772, width: 75, height: 7, fill: '#c82a3a' });
  el(g, 'path', { d: path(rt), fill: 'none', stroke: '#3a36b4', 'stroke-width': 1 });
  blocks(1661, sq.map(b => b.slice(0, 3)), true);

  const rh = join(
    [[1065,137],[1073,160],[1060,182],[1057,205],[1042,222],[1041,285],[985,333],[1010,362],[985,383],[1010,405],[993,422],[1041,455],[1040,475],[1003,497],[1056,525],[1051,565],[1040,585],[1047,610],[1032,630],[1030,655],[1008,677],[1042,715],[1020,738],[1022,750],[1064,780],[1042,810],[1045,850],[1046,890]],
    [[1038,60],[1038,100],[1062,122],[1042,148],[1064,200],[1042,235],[1052,300],[1042,350],[1046,420],[1052,440],[1022,490],[980,520],[968,545],[974,590],[958,620],[960,645],[984,685],[974,715],[1035,745],[1020,780],[1034,788]],
    [[1020,25],[1055,50],[1042,75],[1038,92],[993,123],[995,135],[1020,150],[1025,170],[1110,175],[1182,185],[1182,205],[1085,212],[1028,235],[1041,258],[1015,315],[1040,360],[1018,385],[1047,415],[1035,440],[1047,470],[1040,530],[1083,560],[1047,600],[1058,645],[1036,680],[1046,707],[1025,725],[1036,750],[990,782],[990,800]]);
  gradient('gRH', rh, [[at(958), '#68fa3c'], [at(990), '#86fb3c'], [at(1020), '#aafd3c'], [at(1040), '#c2fe3c'], [at(1062), '#dcf83c'], [at(1083), '#eef03c'], [at(1130), '#ffb03c'], [at(1180), '#ff403c']]);
  el(g, 'path', { d: path(rh) + `L1757.5 ${B}V205z`, fill: 'url(#gRH)' });
  el(g, 'path', { d: path(rh), fill: 'none', stroke: '#e0856a', 'stroke-width': 1.2 });

  X.forEach(x => line(g, x, T, x, B, '#c9c9c9'));
  X.slice(1, 4).forEach(x => { line(g, x, 153, x, T, '#e4e4de'); line(g, x, B, x, 986, '#e4e4de'); });
  line(g, 1468, B, 1854, B, '#c9c9c9');

  [[457.5, '#3b5063', 'TOP8'], [605.5, '#ff4a24', 'TOP TARGET'], [750.5, '#ff4a24', 'BASE TARGET']].forEach(([py, col, name]) => {
    line(g, 1468, py, 1854, py, col, 1.5);
    const m = c.mark(1478, py + 8);
    el(m, 'circle', { cx: 0, cy: 0, r: 6.5, fill: col });
    el(m, 'path', { d: 'M-3.500 1q-.5-3.500 3-3 2.500.5 2.500 3M3.500-1q.5 3.500-3 3-2.500-.5-2.500-3', fill: 'none', stroke: '#fff', 'stroke-width': 1.1 });
    el(m, 'path', { d: 'M8-5.500h9M8 5h9M9.500-.5l2.500 2.500 4-5', fill: 'none', stroke: col, 'stroke-width': 1.1 });
    el(m, 'text', { x: 18, y: 1, class: 'start bold', style: 'fill:' + col }, name);
  });
  X.slice(1).forEach(x => el(g, 'path', { d: `M${x - 8.5} 647.7l8-4.200v8.400z`, fill: '#1408c8' }));

  c.label(1885, 182, 'TVT', 'light');
  for (let i = 0; i < 13; i++) c.label(1886, 255.3 + i * 55.15, (1347.5 + i * 2.5).toLocaleString('en-US', { minimumFractionDigits: 1 }));
  c.label(1883, 977, 'm', 'light');
})();
```
